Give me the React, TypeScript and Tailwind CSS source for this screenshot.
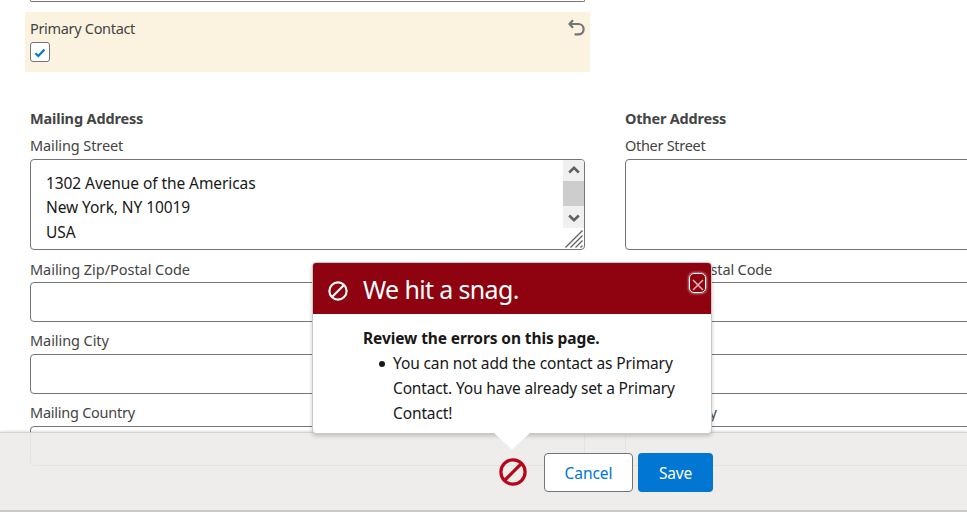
import type { ReactNode } from "react";

function Label({ children, className = "" }: { children: ReactNode; className?: string }) {
  return (
    <div className={`h-6 whitespace-nowrap text-[14.5px] leading-[22px] text-[#444] ${className}`}>{children}</div>
  );
}

function Field({ label, className }: { label: string; className?: string }) {
  return (
    <div className="flex h-[72px] flex-col justify-end">
      <Label className={className}>{label}</Label>
      <div className="h-10 shrink-0 rounded-[4px] border border-[#747474] bg-white" />
    </div>
  );
}

function Ban({ className, width }: { className: string; width: number }) {
  return (
    <svg viewBox="0 0 28 28" className={className} fill="none" stroke="currentColor" strokeWidth={width}>
      <circle cx="14" cy="14" r="12.1" />
      <path d="M5.6 22.4 22.4 5.6" />
    </svg>
  );
}

function MailingColumn() {
  return (
    <div className="flex w-[555px] shrink-0 flex-col">
      <div className="-mx-[5px] flex h-[60px] justify-between bg-[#fbf3e0] px-[5px]">
        <div className="flex flex-col pt-[5px]">
          <Label className="tracking-[-0.32px]">Primary Contact</Label>
          <div className="mt-px flex h-5 w-5 items-center justify-center rounded-[3px] border border-[#747474] bg-white">
            <svg viewBox="0 0 12 10" className="mt-px h-[10px] w-3" fill="none" stroke="#0176d3" strokeWidth="2.2">
              <path d="M1.4 5.2 4.4 8 10.4 1.6" />
            </svg>
          </div>
        </div>
        <svg viewBox="0 0 18 18" className="mt-[7px] h-[18px] w-[18px]" fill="none" stroke="#747474" strokeWidth="2.2" strokeLinejoin="round">
          <path d="M6 1.2 2.4 5 6 8.8M2.4 5H11.4a4.8 4.8 0 0 1 0 10.4H7.6" />
        </svg>
      </div>
      <div className="mt-[35px] h-6 text-[14.5px] leading-[22px] font-bold tracking-[-0.15px] text-[#444]">Mailing Address</div>
      <div className="mt-[3px] h-[25px]">
        <Label className="tracking-[-0.1px]">Mailing Street</Label>
      </div>
      <div className="flex h-[91px] justify-between rounded-[4px] border border-[#747474] bg-white">
        <div className="pt-[11px] pl-[15px] text-[15.5px] leading-[24.4px] tracking-[-0.08px] whitespace-pre text-[#181818]">
          {"1302 Avenue of the Americas\nNew York, NY 10019\nUSA"}
        </div>
        <div className="flex w-[21px] flex-col">
          <div className="flex h-[21px] items-center justify-center rounded-tr-[3px] bg-[#f0f0f0]">
            <svg viewBox="0 0 12 8" className="mb-px h-2 w-3" fill="none" stroke="#606060" strokeWidth="2.6">
              <path d="m1.2 6.5 4.8-4.6 4.8 4.6" />
            </svg>
          </div>
          <div className="h-[25px] bg-[#cdcdcd]" />
          <div className="flex h-[22px] items-center justify-center bg-[#f0f0f0]">
            <svg viewBox="0 0 12 8" className="mt-px h-2 w-3" fill="none" stroke="#606060" strokeWidth="2.6">
              <path d="m1.2 1.5 4.8 4.6 4.8-4.6" />
            </svg>
          </div>
          <svg viewBox="0 0 21 21" className="h-[21px] w-[21px]" fill="none" stroke="#606060" strokeWidth="1.3">
            <path d="M2.5 19.5l17-17M7.5 19.5l12-12M12.5 19.5l7-7M17.5 19.5l2-2" />
          </svg>
        </div>
      </div>
      <Field label="Mailing Zip/Postal Code" className="tracking-[-0.04px]" />
      <Field label="Mailing City" className="-translate-y-px tracking-[-0.07px]" />
      <Field label="Mailing Country" className="-translate-y-px tracking-[-0.25px]" />
    </div>
  );
}

function OtherColumn() {
  return (
    <div className="flex w-[555px] shrink-0 flex-col pt-[95px]">
      <div className="h-6 text-[14.5px] leading-[22px] font-bold tracking-[-0.22px] text-[#444]">Other Address</div>
      <div className="mt-[3px] h-[25px]">
        <Label className="tracking-[-0.3px]">Other Street</Label>
      </div>
      <div className="h-[91px] rounded-[4px] border border-[#747474] bg-white" />
      <Field label="Other Zip/Postal Code" className="tracking-[-0.15px]" />
      <Field label="Other City" className="-translate-y-px" />
      <Field label="Other Country" className="-translate-y-px tracking-[-0.5px]" />
    </div>
  );
}

function ErrorPopover() {
  return (
    <section className="absolute top-[262px] left-[312px] w-[400px] rounded-[4px] border border-[#c9c9c9] bg-white shadow-[0_2px_4px_rgba(0,0,0,0.2)]">
      <header className="flex h-[51px] rounded-t-[3px] bg-[#8e030f] text-white">
        <Ban className="mt-[18px] ml-[15px] h-5 w-5" width={3} />
        <h2 className="ml-[15px] text-[25px] leading-[52px] tracking-[-0.65px] whitespace-nowrap">We hit a snag.</h2>
        <button className="mt-[10px] mr-[5px] ml-auto flex h-5 w-[17px] items-center justify-center rounded-[5px] border border-white shadow-[0_0_3px_#fff]">
          <svg viewBox="0 0 12 12" className="mt-[3px] h-3 w-3 shrink-0" fill="none" stroke="#e0b5b9" strokeWidth="1.5">
            <path d="m1 1 10 10M11 1 1 11" />
          </svg>
        </button>
      </header>
      <div className="h-[119px] pt-3 pl-[50px] text-[15.5px] leading-[25px] whitespace-nowrap text-[#181818]">
        <strong className="block tracking-[-0.1px]">Review the errors on this page.</strong>
        <ul>
          <li className="flex tracking-[-0.12px]">
            <span className="mt-[10px] mr-2 ml-4 h-[6px] w-[6px] rounded-full bg-[#181818]" />
            <span>
              You can not add the contact as Primary
              <br />
              <span className="tracking-[-0.15px]">Contact. You have already set a Primary</span>
              <br />
              Contact!
            </span>
          </li>
        </ul>
      </div>
      <svg viewBox="0 0 38 18" className="absolute top-[169px] left-[180px] h-[18px] w-[38px]">
        <path d="M0 0H38L19 17.5Z" fill="#fff" />
      </svg>
    </section>
  );
}

export default function App() {
  return (
    <main className="relative h-[522px] w-full overflow-hidden bg-white font-['Noto_Sans','Open_Sans',sans-serif]">
      <div className="ml-[30px] h-[2px] w-[555px] rounded-b-[4px] border-x border-b border-[#747474]" />
      <div className="mt-[10px] ml-[30px] flex gap-10">
        <MailingColumn />
        <OtherColumn />
      </div>
      <footer className="absolute inset-x-0 top-[432px] flex h-[80px] items-center border-t border-b-2 border-t-[#d2d1d0] border-b-[#c9c9c9] bg-[#edeceaee] pt-[2px] pl-[499px] shadow-[0_-1px_2px_rgba(0,0,0,0.12)]">
        <Ban className="mb-[2px] h-7 w-7 text-[#ba0517]" width={3.2} />
        <button className="ml-[17px] h-[39px] w-[89px] rounded-[4px] border border-[#747474] bg-white pt-[2px] text-[15.5px] tracking-[-0.05px] text-[#0176d3]">
          Cancel
        </button>
        <button className="ml-[5px] h-[39px] w-[75px] rounded-[4px] bg-[#0176d3] pt-[2px] text-[15.5px] tracking-[-0.2px] text-white">
          Save
        </button>
      </footer>
      <ErrorPopover />
    </main>
  );
}
